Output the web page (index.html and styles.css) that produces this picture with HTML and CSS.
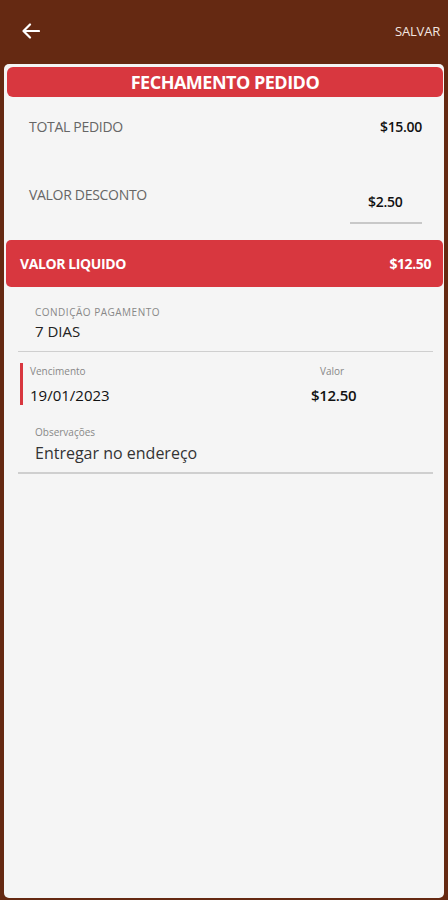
FILE: index.html
```html
<!DOCTYPE html>
<html lang="pt-BR">
<head>
  <meta charset="UTF-8" />
  <meta name="viewport" content="width=device-width, initial-scale=1" />
  <title>Fechamento Pedido</title>
  <link rel="stylesheet" href="styles.css">
</head>
<body>

  <header class="topbar">
    <svg class="back" width="18" height="16" viewBox="0 0 18 16">
      <path d="M17 8H2M8 1.5L1.5 8L8 14.5" fill="none" stroke="white" stroke-width="2.2" stroke-linecap="round" stroke-linejoin="round" />
    </svg>
    <span class="save">SALVAR</span>
  </header>

  <main class="card">
    <h2 class="title">FECHAMENTO PEDIDO</h2>

    <div class="row total">
      <span class="label">TOTAL PEDIDO</span>
      <span class="amount">$15.00</span>
    </div>

    <div class="row discount">
      <span class="label">VALOR DESCONTO</span>
      <span class="amount field">$2.50</span>
    </div>

    <div class="net">
      <span>VALOR LIQUIDO</span>
      <span>$12.50</span>
    </div>

    <div class="block">
      <div class="small caps">CONDIÇÃO PAGAMENTO</div>
      <div class="value">7 DIAS</div>
    </div>

    <div class="due">
      <div class="due-col">
        <div class="small">Vencimento</div>
        <div class="due-value">19/01/2023</div>
      </div>
      <div class="due-col right">
        <div class="small">Valor</div>
        <div class="due-value bold">$12.50</div>
      </div>
    </div>

    <div class="block notes">
      <div class="small">Observações</div>
      <div class="value big">Entregar no endereço</div>
    </div>
  </main>

</body>
</html>
```

FILE: styles.css
```css
* {
  box-sizing: border-box;
}

body {
  margin: 0;
  padding: 0;
  background: #652912;
  font-family: "Open Sans", "Noto Sans", sans-serif;
  color: #222;
  min-height: 100vh;
}

.topbar {
  height: 64px;
  display: flex;
  align-items: center;
  justify-content: space-between;
  padding: 0 8px 2px 22px;
}

.back {
  display: block;
}

.save {
  color: #f3e6e0;
  font-size: 13px;
  letter-spacing: -0.2px;
}

.card {
  margin: 0 4px 2px;
  height: 834px;
  background: #f5f5f5;
  border-radius: 5px;
  padding: 3px 1px 0 3px;
}

.title {
  margin: 0;
  height: 30px;
  background: #d8373f;
  border-radius: 6px;
  color: white;
  text-align: center;
  font-size: 18px;
  font-weight: 700;
  line-height: 30px;
  letter-spacing: -0.5px;
}

.row {
  display: flex;
  justify-content: space-between;
  padding: 0 21px 0 22px;
  font-size: 14px;
}

.label {
  color: #666;
  letter-spacing: -0.3px;
}

.amount {
  color: #111;
  font-weight: 600;
  letter-spacing: -0.3px;
}

.total {
  margin-top: 20px;
  line-height: 20px;
}

.discount {
  margin-top: 48px;
  line-height: 20px;
}

.field {
  margin-top: 7px;
  width: 72px;
  padding: 0 17px 10px 18px;
  border-bottom: 2px solid #c8c8c8;
}

.net {
  margin: 16px 0 0 -1px;
  height: 47px;
  background: #d8373f;
  border-radius: 5px;
  display: flex;
  align-items: center;
  justify-content: space-between;
  padding: 0 12px 0 14px;
  color: white;
  font-size: 14px;
  font-weight: 700;
  letter-spacing: -0.4px;
}

.block {
  margin: 0 10px 0 11px;
  padding: 18px 0 9px 17px;
  border-bottom: 1px solid #cfcfcf;
}

.block .value {
  margin-top: 1px;
}

.small {
  font-size: 10px;
  color: #888;
  line-height: 14px;
}

.caps {
  letter-spacing: 0.5px;
}

.value {
  font-size: 15px;
  color: #222;
  line-height: 22px;
}

.due {
  margin: 11px 0 0 13px;
  border-left: 3px solid #d8373f;
  display: flex;
  padding: 1px 0 0 7px;
}

.due-col {
  flex: 1;
}

.due-col.right {
  flex: 0 0 132px;
}

.due-col.right .small {
  padding-left: 9px;
}

.due-value {
  margin-top: 7px;
  font-size: 15px;
  line-height: 20px;
  color: #111;
}

.bold {
  font-weight: 600;
  letter-spacing: -0.3px;
}

.notes {
  padding-top: 20px;
  padding-bottom: 8px;
  border-bottom: 2px solid #cfcfcf;
}

.notes .value {
  margin-top: 3px;
}

.big {
  font-size: 16px;
  color: #333;
}
```
